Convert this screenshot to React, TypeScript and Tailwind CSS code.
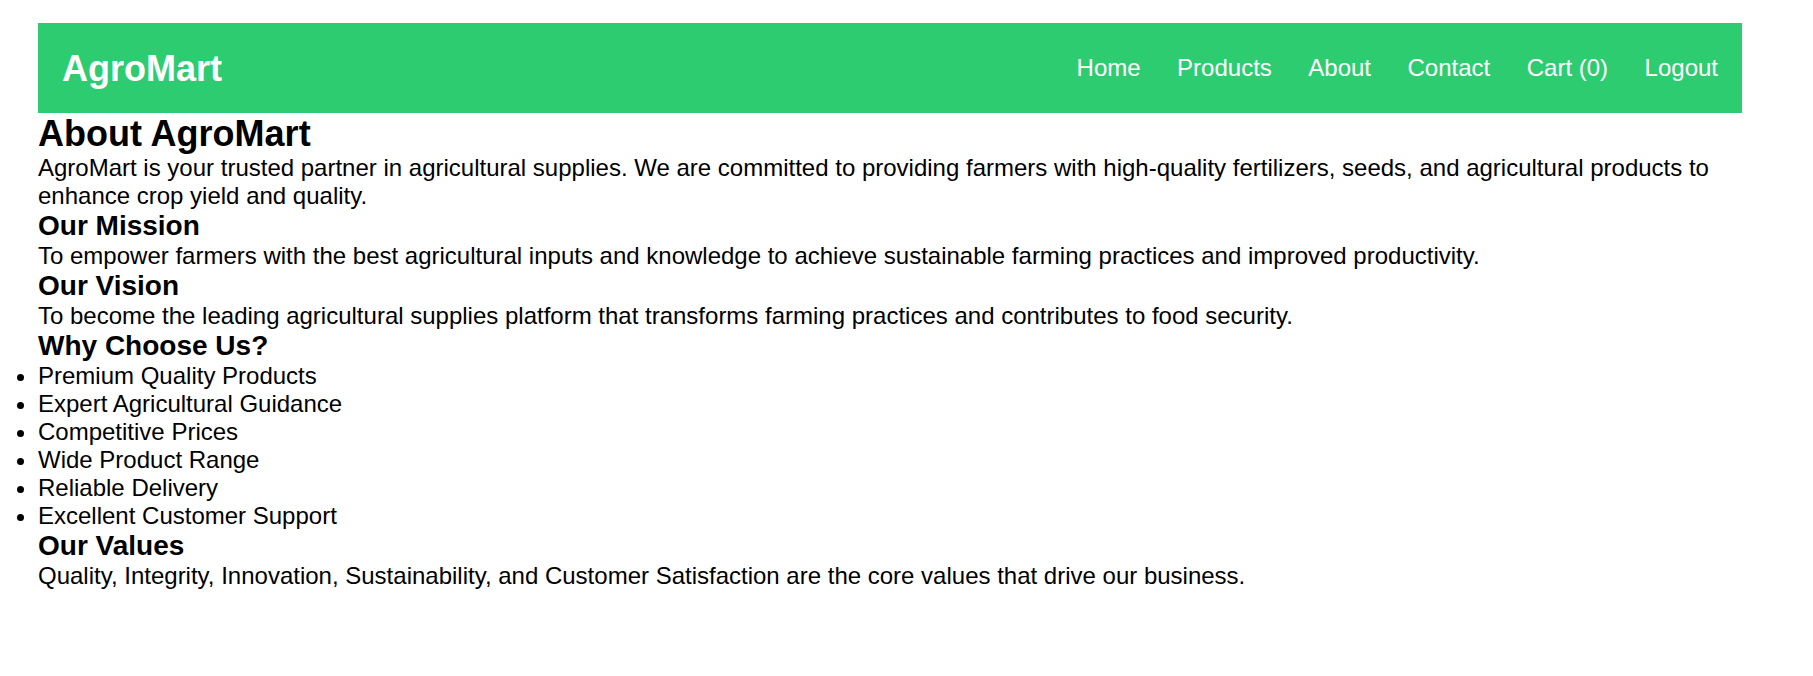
const links = ["Home", "Products", "About", "Contact", "Cart (0)", "Logout"];

const reasons = [
  "Premium Quality Products",
  "Expert Agricultural Guidance",
  "Competitive Prices",
  "Wide Product Range",
  "Reliable Delivery",
  "Excellent Customer Support",
];

const App = () => {
  return (
    <div className="min-h-screen bg-white pt-[23px] pl-[38px] pr-[71px] font-['Liberation_Sans',Arial,sans-serif] text-[24px] leading-[28px] text-black">
      <nav className="flex h-[90px] items-center justify-between bg-[#2ecc71] px-[24px] text-white">
        <div className="text-[36px] leading-[41px] font-bold">AgroMart</div>
        <div className="flex gap-[36.5px]">
          {links.map((link) => (
            <a key={link} href="#" className="text-white">
              {link}
            </a>
          ))}
        </div>
      </nav>
      <main>
        <h1 className="text-[36px] leading-[41px] font-bold">About AgroMart</h1>
        <p>
          AgroMart is your trusted partner in agricultural supplies. We are committed to providing farmers with
          high-quality fertilizers, seeds, and agricultural products to enhance crop yield and quality.
        </p>
        <h2 className="text-[28px] leading-[32px] font-bold">Our Mission</h2>
        <p>
          To empower farmers with the best agricultural inputs and knowledge to achieve sustainable farming practices
          and improved productivity.
        </p>
        <h2 className="text-[28px] leading-[32px] font-bold">Our Vision</h2>
        <p>
          To become the leading agricultural supplies platform that transforms farming practices and contributes to
          food security.
        </p>
        <h2 className="text-[28px] leading-[32px] font-bold">Why Choose Us?</h2>
        <ul className="list-outside list-disc">
          {reasons.map((reason) => (
            <li key={reason}>{reason}</li>
          ))}
        </ul>
        <h2 className="text-[28px] leading-[32px] font-bold">Our Values</h2>
        <p>
          Quality, Integrity, Innovation, Sustainability, and Customer Satisfaction are the core values that drive our
          business.
        </p>
      </main>
    </div>
  );
};

export default App;
